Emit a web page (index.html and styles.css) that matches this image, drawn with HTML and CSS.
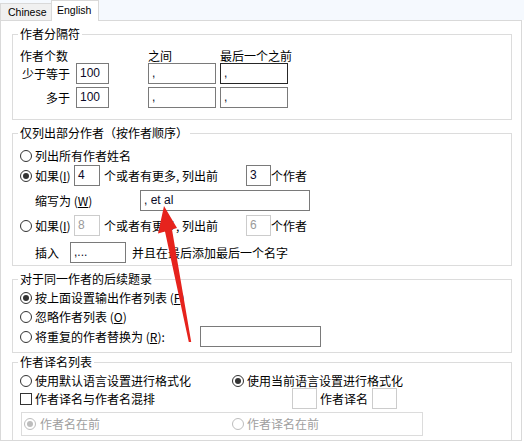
FILE: index.html
```html
<!DOCTYPE html>
<html lang="zh-CN">
<head>
<meta charset="utf-8">
<title>作者设置</title>
<link rel="stylesheet" href="styles.css">
</head>
<body>
<div class="tabs">
  <div class="tab">Chinese</div>
  <div class="tab active">English</div>
</div>
<div class="panel">
  <div class="group g1">
    <div class="legend">作者分隔符</div>
    <div class="sep">
      <div class="sep-row hdr">
        <span class="c1 left">作者个数</span><span class="c2"></span><span class="c3">之间</span><span class="c4">最后一个之前</span>
      </div>
      <div class="sep-row">
        <span class="c1">少于等于</span>
        <span class="c2"><span class="field w33">100</span></span>
        <span class="c3"><span class="field w68">,</span></span>
        <span class="c4"><span class="field w68 focus">,</span></span>
      </div>
      <div class="sep-row r2">
        <span class="c1">多于</span>
        <span class="c2"><span class="field w33">100</span></span>
        <span class="c3"><span class="field w68">,</span></span>
        <span class="c4"><span class="field w68">,</span></span>
      </div>
    </div>
  </div>

  <div class="group g2">
    <div class="legend">仅列出部分作者（按作者顺序）</div>
    <div class="row h18 m7"><span class="radio"></span><span class="txt">列出所有作者姓名</span></div>
    <div class="row h21">
      <span class="radio on"></span><span class="txt w39">如果(<u>I</u>)</span>
      <span class="field w26">4</span>
      <span class="txt ml4 w142">个或者有更多, 列出前</span>
      <span class="field w25">3</span><span class="txt">个作者</span>
    </div>
    <div class="row h21 m4 indent">
      <span class="txt w105">缩写为 (<u>W</u>)</span>
      <span class="field w170">, et al</span>
    </div>
    <div class="row h21 m4">
      <span class="radio"></span><span class="txt w39">如果(<u>I</u>)</span>
      <span class="field w26 dis">8</span>
      <span class="txt ml4 w142">个或者有更多, 列出前</span>
      <span class="field w25 dis">6</span><span class="txt">个作者</span>
    </div>
    <div class="row h21 m6 indent">
      <span class="txt w35">插入</span>
      <span class="field w56">,...</span>
      <span class="txt ml6">并且在最后添加最后一个名字</span>
    </div>
  </div>

  <div class="group g3">
    <div class="legend">对于同一作者的后续题录</div>
    <div class="row h19 m2"><span class="radio on"></span><span class="txt">按上面设置输出作者列表 (<u>F</u>)</span></div>
    <div class="row h19"><span class="radio"></span><span class="txt">忽略作者列表 (<u>O</u>)</span></div>
    <div class="row h21">
      <span class="radio"></span><span class="txt w165">将重复的作者替换为 (<u>R</u>):</span>
      <span class="field w121"></span>
    </div>
  </div>

  <div class="group g4">
    <div class="legend">作者译名列表</div>
    <div class="row h14 m5">
      <span class="item w212"><span class="radio"></span><span class="txt">使用默认语言设置进行格式化</span></span>
      <span class="item"><span class="radio on"></span><span class="txt">使用当前语言设置进行格式化</span></span>
    </div>
    <div class="row h21">
      <span class="item w272"><span class="check"></span><span class="txt">作者译名与作者名混排</span></span>
      <span class="field w25 dis"></span>
      <span class="txt ml3">作者译名</span>
      <span class="field w25 dis ml4"></span>
    </div>
    <div class="order">
      <span class="item w208"><span class="radio on dis gap4"></span><span class="txt muted">作者名在前</span></span>
      <span class="item"><span class="radio dis"></span><span class="txt muted">作者译名在前</span></span>
    </div>
  </div>
</div>

<svg class="arrow" width="524" height="443" viewBox="0 0 524 443" aria-hidden="true">
  <polygon points="164,206 158,233.5 165,231.5 188.8,342 191.2,342 172,229.5 177,228" fill="#e6231d"/>
</svg>
</body>
</html>
```

FILE: styles.css
```css
html, body {
  margin: 0;
  padding: 0;
  background: #fff;
}

body {
  font-family: "Noto Sans CJK SC", "Liberation Sans", sans-serif;
  font-size: 12px;
  color: #000;
  width: 524px;
  height: 443px;
  overflow: hidden;
}

/* ---------- tabs ---------- */
.tabs {
  height: 20px;
  background: #f5f9fe;
  display: flex;
  align-items: flex-end;
}

.tab {
  box-sizing: border-box;
  height: 17px;
  width: 51px;
  padding-left: 7px;
  border: 1px solid #d9d9d9;
  border-bottom: none;
  border-right: none;
  background: #f0f0f0;
  font-family: "Liberation Sans", sans-serif;
  font-size: 10.5px;
  line-height: 16px;
  color: #000;
}

.tab.active {
  position: relative;
  z-index: 1;
  height: 21px;
  width: 48px;
  margin-bottom: -1px;
  padding-left: 5px;
  border-right: 1px solid #d9d9d9;
  background: #fff;
  line-height: 18px;
}

/* ---------- panel ---------- */
.panel {
  box-sizing: border-box;
  width: 522px;
  height: 421px;
  border: 1px solid #d9d9d9;
  background: #fff;
  overflow: hidden;
}

.group {
  box-sizing: border-box;
  width: 500px;
  margin: 13px 0 0 11px;
  border: 1px solid #dcdcdc;
}

.g4 {
  margin-top: 9px;
  padding-bottom: 10px;
}

.g2 { padding-bottom: 2px; }
.g3 { padding-bottom: 5px; }

.legend {
  width: max-content;
  margin: -8px 0 0 5px;
  padding: 0 2px;
  background: #fff;
  line-height: 14px;
}

/* ---------- separator grid ---------- */
.sep {
  margin: 7px 0 11px 7px;
}

.sep-row {
  display: flex;
  align-items: center;
  height: 21px;
}

.sep-row.hdr {
  height: 15px;
  line-height: 15px;
}

.sep-row.r2 { margin-top: 3px; }

.c1 {
  flex: none;
  width: 56px;
  box-sizing: border-box;
  padding-right: 6px;
  text-align: right;
}

.c1.left { text-align: left; }

.c2, .c3 {
  flex: none;
  width: 72px;
}

.c4 { flex: none; }

/* ---------- fields ---------- */
.field {
  display: block;
  flex: none;
  box-sizing: border-box;
  height: 21px;
  border: 1px solid #7a7a7a;
  background: #fff;
  padding-left: 3px;
  font-family: "Liberation Sans", sans-serif;
  font-size: 12px;
  line-height: 19px;
  color: #0a0a28;
  white-space: nowrap;
}

.field.focus { border-color: #262626; }

.field.dis {
  border-color: #cccccc;
  color: #9a9a9a;
}

.w25 { width: 25px; }
.w26 { width: 26px; }
.w33 { width: 33px; }
.w56 { width: 56px; }
.w68 { width: 68px; }
.w121 { width: 121px; }
.w170 { width: 170px; }

/* ---------- rows ---------- */
.row {
  display: flex;
  align-items: center;
  padding-left: 7px;
}

.row.indent { padding-left: 22px; }

.h14 { height: 14px; }
.h18 { height: 18px; }
.h19 { height: 19px; }
.h21 { height: 21px; }

.m2 { margin-top: 2px; }
.m4 { margin-top: 4px; }
.m5 { margin-top: 5px; }
.m6 { margin-top: 6px; }
.m7 { margin-top: 7px; }

.txt {
  flex: none;
  white-space: nowrap;
  line-height: 16px;
}

.txt u { text-underline-offset: 1px; }

.txt.muted { color: #a0a0a0; }

.w35 { width: 35px; }
.w39 { width: 39px; }
.w105 { width: 105px; }
.w142 { width: 142px; }
.w165 { width: 165px; }

.ml3 { margin-left: 3px; }
.ml4 { margin-left: 4px; }
.ml6 { margin-left: 6px; }

.item {
  flex: none;
  display: flex;
  align-items: center;
}

.w208 { width: 208px; }
.w212 { width: 212px; }
.w272 { width: 272px; }

/* ---------- radio / check ---------- */
.radio {
  flex: none;
  box-sizing: border-box;
  width: 12px;
  height: 12px;
  margin-right: 3px;
  border: 1px solid #333;
  border-radius: 50%;
  background: #fff;
}

.radio.on::after {
  content: "";
  display: block;
  width: 6px;
  height: 6px;
  margin: 2px;
  border-radius: 50%;
  background: #333;
}

.radio.dis { border-color: #bdbdbd; }
.radio.dis.on::after { background: #bdbdbd; }
.radio.gap4 { margin-right: 4px; }

.check {
  flex: none;
  box-sizing: border-box;
  width: 12px;
  height: 12px;
  margin-right: 3px;
  border: 1px solid #333;
  background: #fff;
}

/* ---------- inner order box ---------- */
.order {
  box-sizing: border-box;
  display: flex;
  align-items: center;
  width: 402px;
  height: 24px;
  margin: 3px 0 0 8px;
  padding-left: 2px;
  border: 1px solid #dcdcdc;
}

/* ---------- arrow overlay ---------- */
.arrow {
  position: absolute;
  left: 0;
  top: 0;
  pointer-events: none;
}
```
